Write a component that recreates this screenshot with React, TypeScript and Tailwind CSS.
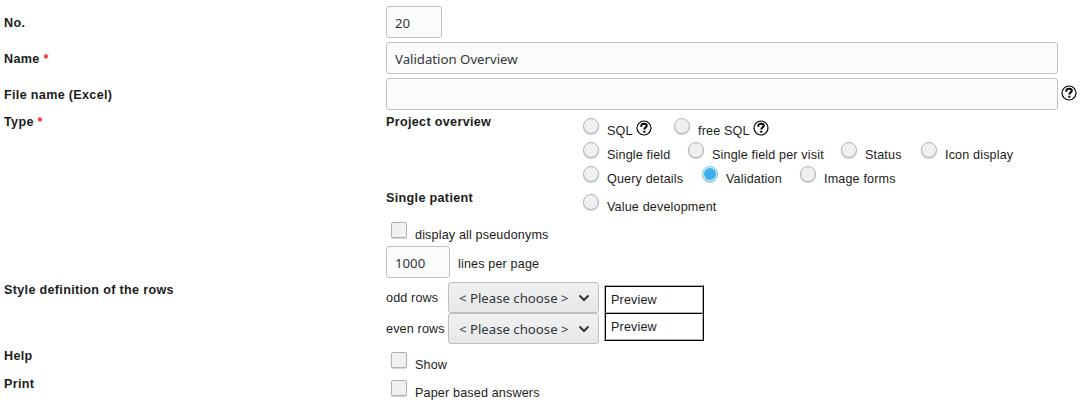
import React from "react";

function HelpIcon() {
  return (
    <svg width="16" height="16" viewBox="0 0 16 16" fill="none" stroke="#000" className="shrink-0">
      <circle cx="8" cy="8" r="7" strokeWidth="1.2" />
      <path d="M5.300 6.700V5.800C5.300 4.400 6.300 3.800 8 3.800s2.800.600 2.800 1.900c0 1.700-2.500 1.700-2.500 3.800" strokeWidth="2" />
      <path d="M7.300 11.700h2" strokeWidth="2" />
    </svg>
  );
}

function Title({ children, required, className = "" }: { children: React.ReactNode; required?: boolean; className?: string }) {
  return (
    <div className={"h-4 whitespace-nowrap text-[12.6px] font-bold leading-4 tracking-[0.32px] " + className}>
      {children}
      {required && <span className="text-[#f22]"> *</span>}
    </div>
  );
}

function Radio({ label, width, checked, help }: { label: string; width: string; checked?: boolean; help?: boolean }) {
  return (
    <label className={"flex h-6 shrink-0 items-start " + width}>
      <span className="mt-0.5 flex size-4 shrink-0 items-center justify-center">
        {checked ? (
          <span className="flex size-4 items-center justify-center rounded-full border border-[#79c6ef] bg-[#d3edfb] shadow-[0_1px_1px_#d0d0d0]">
            <span className="size-3 rounded-full bg-[#3daee9]" />
          </span>
        ) : (
          <span className="size-4 rounded-full border border-[#b4b5b6] bg-[#eff0f1] shadow-[0_1px_1px_#d0d0d0]" />
        )}
      </span>
      <span className="ml-2 mt-[7px] whitespace-nowrap leading-4">{label}</span>
      {help && <span className="ml-[3px] mt-1"><HelpIcon /></span>}
    </label>
  );
}

function Check({ label }: { label: string }) {
  return (
    <label className="flex h-7 items-start pl-[5px]">
      <span className="mt-1.5 size-4 shrink-0 rounded-[2px] border border-[#b0b1b2] bg-[#eff0f1] shadow-[0_1px_1px_#d0d0d0]" />
      <span className="ml-2 mt-[11px] leading-4">{label}</span>
    </label>
  );
}

const field = "h-8 rounded-[3px] border border-[#c0c1c2] bg-[#fcfcfc] px-2 pt-0.5 font-['Noto_Sans',sans-serif] text-[13.2px] tracking-normal text-[#31363b] outline-none";

function Choose() {
  return (
    <button className="flex h-[31px] w-[151px] items-center rounded-[3px] border border-[#bcbebf] bg-linear-to-b from-[#f1f1f2] to-[#e6e7e8] pl-2.5 font-['Noto_Sans',sans-serif] text-[13.2px] tracking-normal text-[#31363b]">
      <span className="w-[108px] whitespace-nowrap pt-0.5 text-left">&lt; Please choose &gt;</span>
      <svg width="12" height="8" viewBox="0 0 12 8" fill="none" stroke="#31363b" strokeWidth="2" className="ml-[11px]">
        <path d="M1.500 1.500 6 6l4.500-4.500" />
      </svg>
    </button>
  );
}

function Preview() {
  return (
    <div className="h-[27px] border border-b-[#b0b0b0] border-l-black border-r-[#b0b0b0] border-t-black pl-[5px] pt-[5px]">
      Preview
    </div>
  );
}

export default function App() {
  return (
    <main className="h-[403px] w-[1080px] overflow-hidden bg-white pl-1 pt-1 font-['Liberation_Sans',sans-serif] text-[12.6px] tracking-[0.15px] text-[#1c1c1c]">
      <div className="grid grid-cols-[382px_1fr]">
        <Title className="mt-[11px]">No.</Title>
        <div className="h-9 pt-0.5"><input className={field + " w-14"} defaultValue="20" /></div>
        <Title className="mt-[11px]" required>Name</Title>
        <div className="h-9 pt-0.5"><input className={field + " w-[672px]"} defaultValue="Validation Overview" /></div>
        <Title className="mt-[11px]">File name (Excel)</Title>
        <div className="flex h-9 pt-0.5">
          <input className={field + " w-[672px]"} />
          <span className="ml-[3px] mt-[7px]"><HelpIcon /></span>
        </div>

        <Title className="mt-0.5" required>Type</Title>
        <div className="h-[168px]">
          <div className="flex h-[76px]">
            <Title className="mt-0.5 w-[197px]">Project overview</Title>
            <div className="pt-1">
              <div className="flex">
                <Radio label="SQL" width="w-[91px]" help />
                <Radio label="free SQL" width="w-[120px]" help />
              </div>
              <div className="flex">
                <Radio label="Single field" width="w-[105px]" />
                <Radio label="Single field per visit" width="w-[153px]" />
                <Radio label="Status" width="w-20" />
                <Radio label="Icon display" width="w-[110px]" />
              </div>
              <div className="flex">
                <Radio label="Query details" width="w-[119px]" />
                <Radio label="Validation" width="w-[98px]" checked />
                <Radio label="Image forms" width="w-[110px]" />
              </div>
            </div>
          </div>
          <div className="flex h-7">
            <Title className="mt-0.5 w-[197px]">Single patient</Title>
            <div className="pt-1"><Radio label="Value development" width="w-40" /></div>
          </div>
          <Check label="display all pseudonyms" />
          <div className="flex h-9 items-center">
            <input className={field + " w-16"} defaultValue="1000" />
            <span className="ml-2 pt-1">lines per page</span>
          </div>
        </div>

        <Title className="mt-0.5">Style definition of the rows</Title>
        <div className="flex h-[66px] pt-[2px]">
          <div className="w-[62px] whitespace-nowrap leading-4">
            <div className="h-[31px] pt-2">odd rows</div>
            <div className="h-[31px] pt-2">even rows</div>
          </div>
          <div><Choose /><Choose /></div>
          <div className="ml-[5px] mt-[3px] h-14 w-[100px] border border-b-black border-l-[#b0b0b0] border-r-black border-t-[#b0b0b0] leading-4">
            <Preview />
            <Preview />
          </div>
        </div>

        <Title className="mt-0.5">Help</Title>
        <Check label="Show" />
        <Title className="mt-0.5">Print</Title>
        <Check label="Paper based answers" />
      </div>
    </main>
  );
}
